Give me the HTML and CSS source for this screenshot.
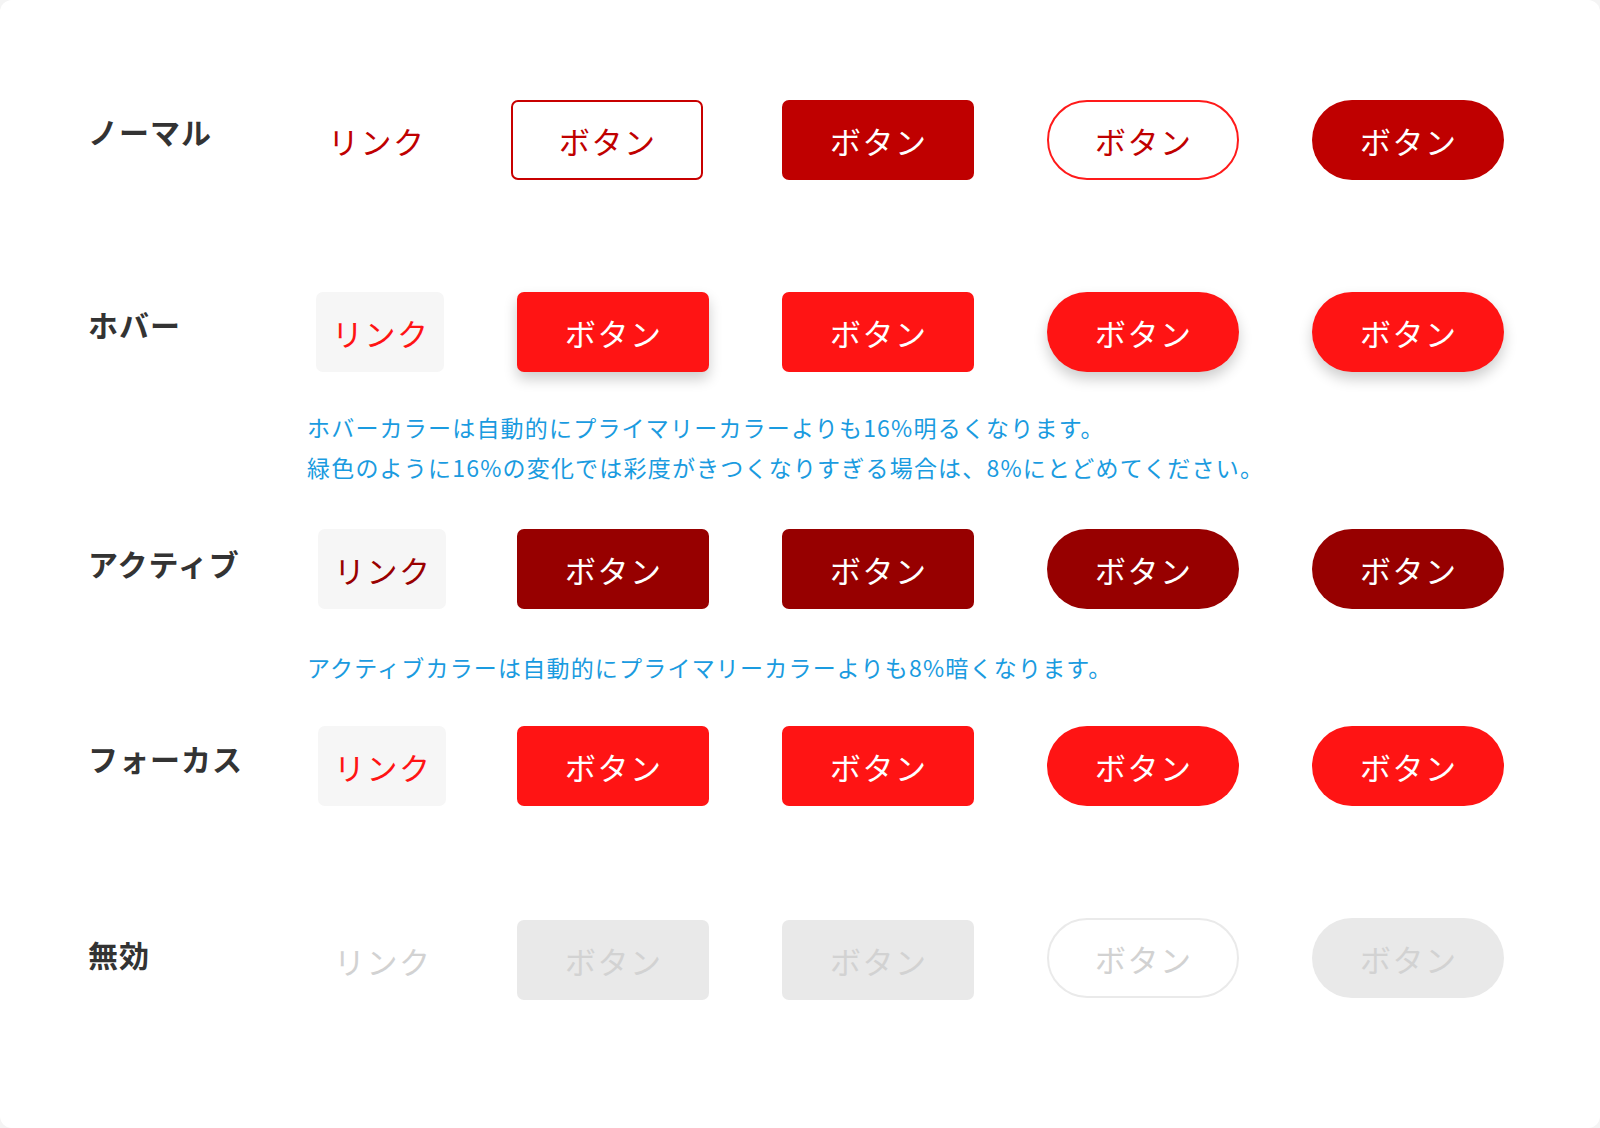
FILE: index.html
```html
<!DOCTYPE html>
<html lang="ja">
<head>
<meta charset="utf-8">
<title>ボタンの状態</title>
<link rel="stylesheet" href="styles.css">
</head>
<body>
<main class="card">
  <div class="row row--normal">
    <div class="label">ノーマル</div>
    <a class="link link--normal">リンク</a>
    <span class="btn btn--outline btn--first">ボタン</span>
    <span class="btn btn--normal">ボタン</span>
    <span class="btn btn--pill btn--outline-pill">ボタン</span>
    <span class="btn btn--pill btn--normal">ボタン</span>
  </div>

  <div class="row row--hover">
    <div class="label">ホバー</div>
    <a class="link link--bg link--hover">リンク</a>
    <span class="btn btn--hover">ボタン</span>
    <span class="btn btn--hover btn--flat">ボタン</span>
    <span class="btn btn--pill btn--hover">ボタン</span>
    <span class="btn btn--pill btn--hover">ボタン</span>
  </div>
  <p class="note note--hover">ホバーカラーは自動的にプライマリーカラーよりも16%明るくなります。<br>緑色のように16%の変化では彩度がきつくなりすぎる場合は、8%にとどめてください。</p>

  <div class="row row--active">
    <div class="label">アクティブ</div>
    <a class="link link--bg link--active">リンク</a>
    <span class="btn btn--active">ボタン</span>
    <span class="btn btn--active">ボタン</span>
    <span class="btn btn--pill btn--active">ボタン</span>
    <span class="btn btn--pill btn--active">ボタン</span>
  </div>
  <p class="note">アクティブカラーは自動的にプライマリーカラーよりも8%暗くなります。</p>

  <div class="row row--focus">
    <div class="label">フォーカス</div>
    <a class="link link--bg link--focus">リンク</a>
    <span class="btn btn--focus">ボタン</span>
    <span class="btn btn--focus">ボタン</span>
    <span class="btn btn--pill btn--focus">ボタン</span>
    <span class="btn btn--pill btn--focus">ボタン</span>
  </div>

  <div class="row row--disabled">
    <div class="label">無効</div>
    <a class="link link--disabled">リンク</a>
    <span class="btn btn--disabled">ボタン</span>
    <span class="btn btn--disabled">ボタン</span>
    <span class="btn btn--pill btn--disabled-outline btn--raise">ボタン</span>
    <span class="btn btn--pill btn--disabled btn--raise">ボタン</span>
  </div>
</main>
</body>
</html>
```

FILE: styles.css
```css
html {
  background: #f4f4f4;
}
body {
  margin: 0;
  font-family: "Noto Sans CJK JP", "Noto Sans", sans-serif;
}
.card {
  box-sizing: border-box;
  min-height: 1128px;
  background: #ffffff;
  border-radius: 12px;
  padding: 100px 0 0 88px;
}
.row {
  display: grid;
  grid-template-columns: 155px 128px 192px 192px 192px 192px;
  column-gap: 73px;
  align-items: center;
  height: 80px;
}
.row + .row {
  margin-top: 112px;
}
.row + .row--disabled {
  margin-top: 114px;
}
.label {
  font-size: 30px;
  font-weight: 700;
  letter-spacing: 1px;
  color: #333333;
  white-space: nowrap;
  margin-bottom: 12px;
}
.row--normal .label {
  margin-bottom: 18px;
}
.row--hover .label {
  margin-bottom: 16px;
}
.row--focus .label {
  margin-bottom: 16px;
}
.link,
.btn {
  box-sizing: border-box;
  display: flex;
  align-items: center;
  justify-content: center;
  height: 80px;
  font-size: 31px;
  letter-spacing: 1.5px;
  padding-left: 1.5px;
  line-height: 1;
  white-space: nowrap;
}
.link {
  width: 128px;
  border-radius: 7px;
}
.link--normal { color: #c00000; margin-left: -4px; }
.link--bg { background: #f6f6f6; }
.link--hover { color: #ff1414; }
.link--active { color: #990000; margin-left: 2px; }
.link--focus { color: #ff1414; margin-left: 2px; }
.link--disabled { color: #d2d2d2; margin-left: 2px; }

.btn {
  width: 192px;
  border-radius: 7px;
  color: #ffffff;
}
.btn--pill {
  border-radius: 40px;
}
.btn--first {
  margin-left: -6px;
}
.btn--outline {
  border: 2px solid #c80000;
  color: #c00000;
  background: #ffffff;
}
.btn--outline-pill {
  border: 2px solid #ff1a1a;
  color: #c00000;
  background: #ffffff;
}
.btn--normal {
  background: #bf0000;
}
.btn--hover {
  background: #ff1414;
  box-shadow: 0 7px 14px rgba(0, 0, 0, 0.2);
}
.btn--flat {
  box-shadow: none;
}
.btn--active {
  background: #970000;
}
.btn--focus {
  background: #ff1414;
}
.btn--disabled {
  background: #e9e9e9;
  color: #d2d2d2;
}
.btn--disabled-outline {
  background: #ffffff;
  border: 2px solid #eaeaea;
  color: #d2d2d2;
}
.btn--raise {
  margin-top: -4px;
}
.note {
  margin: 38px 0 39px 219px;
  font-size: 23px;
  line-height: 40px;
  letter-spacing: 1.2px;
  color: #1a9be0;
}
.note--hover {
  margin-top: 35px;
  margin-bottom: 42px;
}
```
